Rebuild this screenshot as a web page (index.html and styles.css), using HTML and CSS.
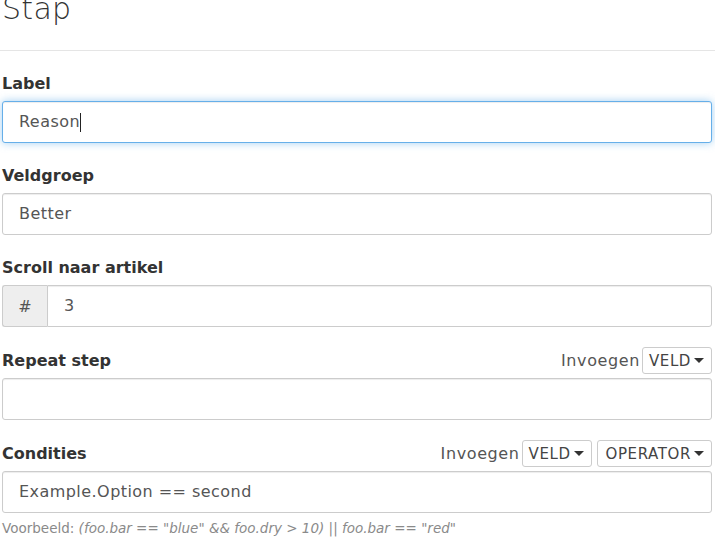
FILE: index.html
```html
<!DOCTYPE html>
<html lang="nl">
<head>
<meta charset="utf-8">
<title>Stap</title>
<link rel="stylesheet" href="styles.css">
</head>
<body>
<div class="page">
  <h1 class="title">Stap</h1>
  <hr class="divider">

  <div class="form-group">
    <div class="label-row"><label class="label">Label</label></div>
    <div class="form-control focused"><span class="value">Reason</span><span class="caret-cursor"></span></div>
  </div>

  <div class="form-group">
    <div class="label-row"><label class="label">Veldgroep</label></div>
    <div class="form-control"><span class="value">Better</span></div>
  </div>

  <div class="form-group">
    <div class="label-row"><label class="label">Scroll naar artikel</label></div>
    <div class="input-group">
      <span class="addon">#</span>
      <div class="form-control grouped"><span class="value">3</span></div>
    </div>
  </div>

  <div class="form-group">
    <div class="label-row with-buttons">
      <label class="label">Repeat step</label>
      <div class="insert">
        <span class="insert-text">Invoegen</span>
        <button class="btn">VELD<span class="caret"></span></button>
      </div>
    </div>
    <div class="form-control"></div>
  </div>

  <div class="form-group last">
    <div class="label-row with-buttons">
      <label class="label">Condities</label>
      <div class="insert">
        <span class="insert-text">Invoegen</span>
        <button class="btn">VELD<span class="caret"></span></button>
        <button class="btn gap">OPERATOR<span class="caret"></span></button>
      </div>
    </div>
    <div class="form-control"><span class="value">Example.Option == second</span></div>
    <p class="help">Voorbeeld: <em>(foo.bar == "blue" &amp;&amp; foo.dry &gt; 10) || foo.bar == "red"</em></p>
  </div>
</div>
</body>
</html>
```
FILE: styles.css
```css
html, body {
  margin: 0;
  padding: 0;
  background: #fff;
}
body {
  font-family: "DejaVu Sans", "Open Sans", sans-serif;
  color: #333;
  overflow: hidden;
}
.page {
  width: 710px;
  padding-left: 2px;
  margin-top: -9px;
}
.title {
  margin: 0;
  font-size: 30px;
  font-weight: 300;
  line-height: 36px;
  color: #333;
  letter-spacing: 0.3px;
}
.divider {
  border: 0;
  border-top: 1px solid #e5e5e5;
  margin: 23px -2px 20px -2px;
  width: 715px;
}
.form-group {
  margin-bottom: 20px;
}
.label-row {
  display: flex;
  align-items: center;
  justify-content: space-between;
  min-height: 25px;
  margin-bottom: 5px;
}
.label-row.with-buttons {
  min-height: 27px;
  margin-bottom: 4px;
}
.label {
  font-weight: 700;
  font-size: 16px;
  color: #333;
}
.form-control {
  box-sizing: border-box;
  height: 42px;
  border: 1px solid #ccc;
  border-radius: 3px;
  padding: 8px 16px;
  font-size: 16px;
  line-height: 24px;
  letter-spacing: 0.45px;
  color: #555;
  background: #fff;
  box-shadow: inset 0 1px 1px rgba(0,0,0,.075);
  display: flex;
  align-items: center;
}
.form-control.focused {
  border-color: #66afe9;
  box-shadow: inset 0 1px 1px rgba(0,0,0,.075), 0 0 8px rgba(102,175,233,.6);
}
.caret-cursor {
  display: inline-block;
  width: 1px;
  height: 19px;
  background: #222;
  margin-left: 0;
}
.input-group {
  display: flex;
}
.addon {
  box-sizing: border-box;
  width: 45px;
  height: 42px;
  display: flex;
  align-items: center;
  justify-content: center;
  background: #eee;
  border: 1px solid #ccc;
  border-right: 0;
  border-radius: 3px 0 0 3px;
  color: #555;
  font-size: 16px;
}
.form-control.grouped {
  flex: 1;
  border-radius: 0 3px 3px 0;
  padding-left: 16px;
}
.insert {
  display: flex;
  align-items: center;
}
.insert-text {
  font-size: 16px;
  letter-spacing: 0.6px;
  color: #555;
  margin-right: 2px;
}
.btn {
  box-sizing: border-box;
  height: 27px;
  border: 1px solid #ccc;
  border-radius: 3px;
  background: #fff;
  font-family: inherit;
  font-size: 15px;
  letter-spacing: 0.6px;
  color: #444;
  padding: 0 7px 0 6px;
  display: flex;
  align-items: center;
}
.btn.gap {
  margin-left: 5px;
  padding-left: 8px;
}
.caret {
  display: inline-block;
  width: 0;
  height: 0;
  margin-left: 3px;
  border-top: 5px solid #333;
  border-left: 5px solid transparent;
  border-right: 5px solid transparent;
}
.help {
  margin: 7px 0 0 0;
  font-size: 13.5px;
  color: #8a8a8a;
}
.help em {
  font-style: italic;
}
```
